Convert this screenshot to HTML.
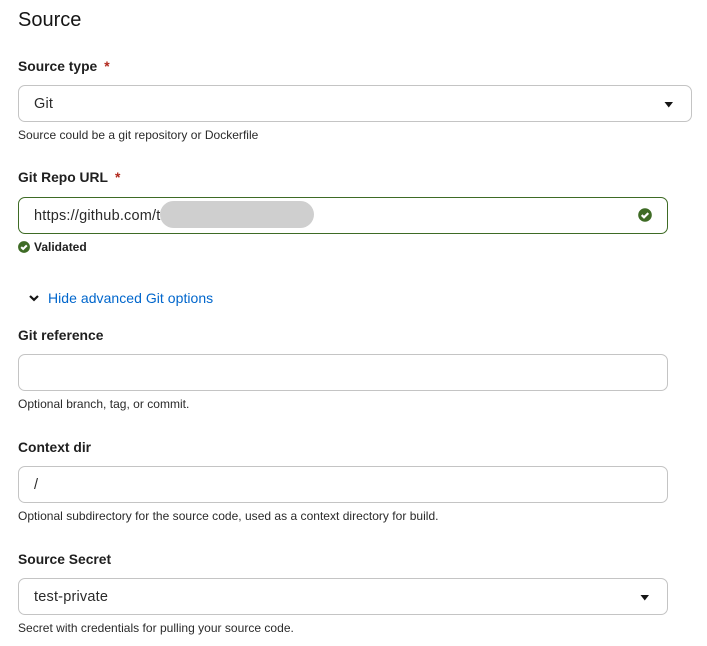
<!DOCTYPE html>
<html><head><meta charset="utf-8"><style>
html,body{margin:0;padding:0;background:#fff;width:707px;height:646px;overflow:hidden}
body{position:relative;font-family:"Liberation Sans",sans-serif;color:#151515}
.t{position:absolute;white-space:nowrap;line-height:20px}
.l{font-weight:700;font-size:13.85px;color:#1f1f1f}
.h{font-size:12px;color:#2a2a2a;letter-spacing:.02px}
.v{font-size:14.5px;color:#2a2a2a;letter-spacing:.2px}
.b{position:absolute;box-sizing:border-box;height:37px;left:18px;width:650px;border:1px solid #c4c4c4;border-radius:7px;background:#fff}
.r{color:#b1281c;font-weight:700}
svg{position:absolute}
</style></head><body>
<div class="t" style="left:18px;top:10px;font-size:20px;color:#151515">Source</div>

<div class="t l" style="left:18px;top:56px">Source type<span class="r" style="margin-left:7px">*</span></div>
<div class="b" style="top:85px;width:674px"></div>
<div class="t v" style="left:34px;top:94px">Git</div>
<svg style="left:664px;top:102px" width="10" height="6"><path d="M.5 0H9L4.75 5.5Z" fill="#151515"/></svg>
<div class="t h" style="left:18px;top:125px">Source could be a git repository or Dockerfile</div>

<div class="t l" style="left:18px;top:167px">Git Repo URL<span class="r" style="margin-left:7px">*</span></div>
<div class="b" style="top:197px;border-color:#3e6b25"></div>
<div class="t v" style="left:34px;top:206px">https://github.com/t</div>
<div style="position:absolute;left:160px;top:201px;width:154px;height:27px;border-radius:14px;background:#cfcfcf"></div>
<svg style="left:638px;top:208px" width="14" height="14" viewBox="0 0 14 14"><circle cx="7" cy="7" r="6.8" fill="#3e6b25"/><path d="M3.7 7.1L6 9.3L10.3 5.1" fill="none" stroke="#fff" stroke-width="2.2"/></svg>
<svg style="left:18px;top:241px" width="12" height="12" viewBox="0 0 14 14"><circle cx="7" cy="7" r="6.9" fill="#3e6b25"/><path d="M3.7 7.1L6 9.3L10.3 5.1" fill="none" stroke="#fff" stroke-width="2.4"/></svg>
<div class="t" style="left:34px;top:237px;font-size:12px;font-weight:700;color:#1f1f1f">Validated</div>

<svg style="left:29px;top:295px" width="10" height="7" viewBox="0 0 10 7"><path d="M1 1L5 4.8L9 1" fill="none" stroke="#151515" stroke-width="2.2"/></svg>
<div class="t" style="left:48px;top:288px;font-size:14px;color:#0066cc;letter-spacing:.04px">Hide advanced Git options</div>

<div class="t l" style="left:18px;top:325px">Git reference</div>
<div class="b" style="top:354px"></div>
<div class="t h" style="left:18px;top:394px">Optional branch, tag, or commit.</div>

<div class="t l" style="left:18px;top:437px">Context dir</div>
<div class="b" style="top:466px"></div>
<div class="t v" style="left:34px;top:475px">/</div>
<div class="t h" style="left:18px;top:506px">Optional subdirectory for the source code, used as a context directory for build.</div>

<div class="t l" style="left:18px;top:549px">Source Secret</div>
<div class="b" style="top:578px"></div>
<div class="t v" style="left:34px;top:587px">test-private</div>
<svg style="left:640px;top:595px" width="10" height="6"><path d="M.5 0H9L4.75 5.5Z" fill="#151515"/></svg>
<div class="t h" style="left:18px;top:618px">Secret with credentials for pulling your source code.</div>
</body></html>
